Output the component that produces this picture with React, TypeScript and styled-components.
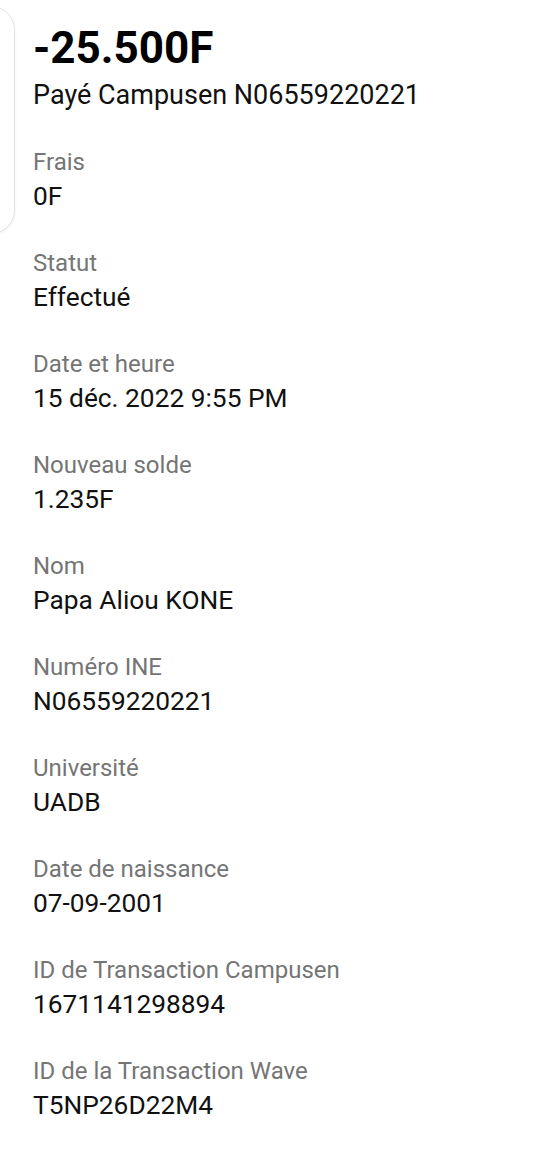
import React from "react";
import styled, { createGlobalStyle } from "styled-components";

const GlobalStyle = createGlobalStyle`
  html, body {
    margin: 0;
    padding: 0;
    background: #ffffff;
  }
  body {
    font-family: Roboto, "Noto Sans", "Liberation Sans", sans-serif;
    -webkit-font-smoothing: antialiased;
  }
`;

const Page = styled.div`
  position: relative;
  width: 542px;
  min-height: 1166px;
  box-sizing: border-box;
  padding: 22px 24px 40px 33px;
  background: #ffffff;
  overflow: hidden;
  display: flex;
  flex-direction: column;
  gap: 35px;
`;

const PeekCard = styled.div`
  position: absolute;
  left: -40px;
  top: 6px;
  width: 53px;
  height: 226px;
  border: 1px solid #e4e4e4;
  border-radius: 24px;
  box-shadow: 0 1px 3px rgba(0, 0, 0, 0.06);
  background: #ffffff;
`;

const Header = styled.header`
  display: flex;
  flex-direction: column;
  gap: 6px;
  padding-bottom: 2px;
`;

const Amount = styled.h1`
  margin: 0;
  font-size: 44px;
  line-height: 52px;
  font-weight: 700;
  color: #000000;
`;

const Subtitle = styled.div`
  font-size: 27px;
  line-height: 30px;
  color: #111111;
`;

const Row = styled.div`
  display: flex;
  flex-direction: column;
  gap: 2px;
`;

const Label = styled.div`
  font-size: 24px;
  line-height: 30px;
  color: #757575;
`;

const Value = styled.div`
  font-size: 26.3px;
  line-height: 34px;
  color: #111111;
`;

const rows: [string, string][] = [
  ["Frais", "0F"],
  ["Statut", "Effectué"],
  ["Date et heure", "15 déc. 2022 9:55 PM"],
  ["Nouveau solde", "1.235F"],
  ["Nom", "Papa Aliou KONE"],
  ["Numéro INE", "N06559220221"],
  ["Université", "UADB"],
  ["Date de naissance", "07-09-2001"],
  ["ID de Transaction Campusen", "1671141298894"],
  ["ID de la Transaction Wave", "T5NP26D22M4"],
];

export default function App() {
  return (
    <>
      <GlobalStyle />
      <Page>
        <PeekCard />
        <Header>
          <Amount>-25.500F</Amount>
          <Subtitle>Payé Campusen N06559220221</Subtitle>
        </Header>
        {rows.map(([label, value]) => (
          <Row key={label}>
            <Label>{label}</Label>
            <Value>{value}</Value>
          </Row>
        ))}
      </Page>
    </>
  );
}
